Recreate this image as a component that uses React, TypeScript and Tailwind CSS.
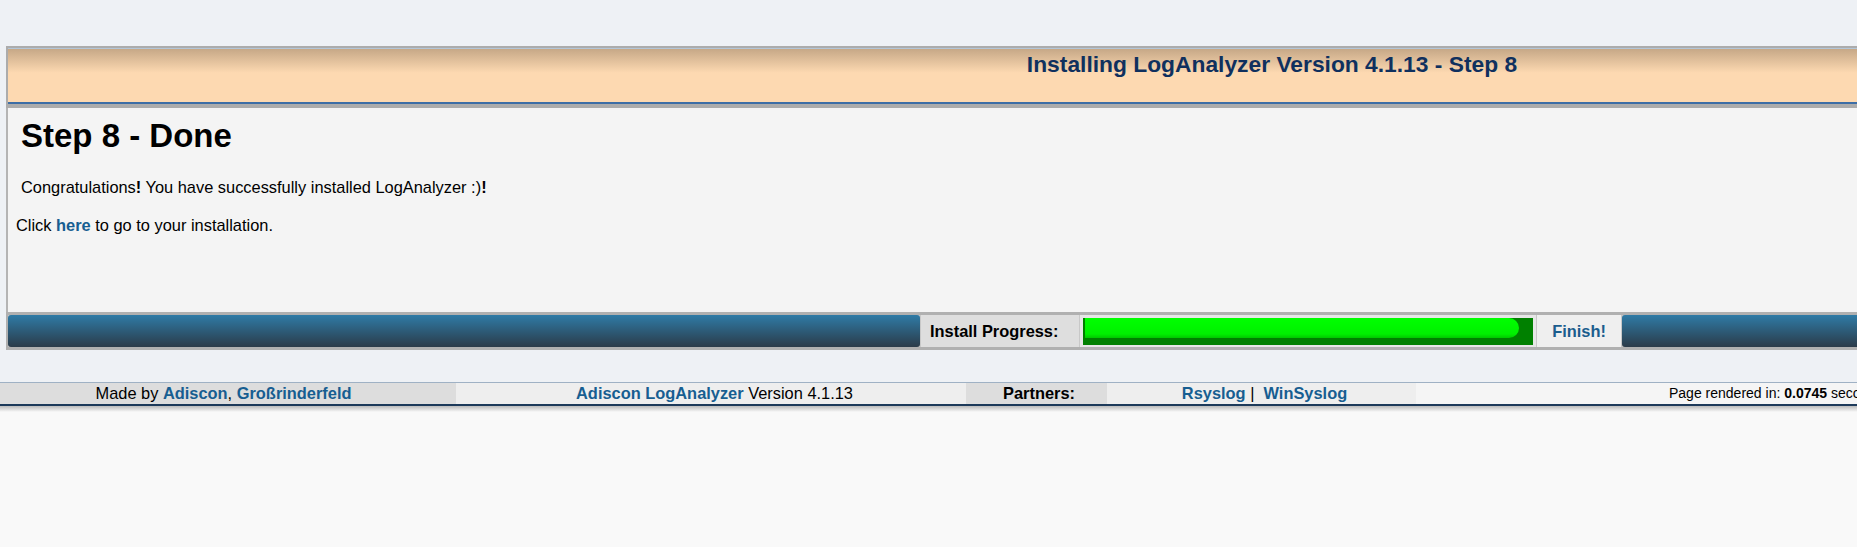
import React from "react";

const font = { fontFamily: '"Liberation Sans", Arial, sans-serif' };

const ProgressRow = () => (
  <div className="flex h-[38px] border-y-[3px] border-x-2 border-[#b0b0b0] bg-[#c8c8c8] gap-[1px]">
    <div className="w-[912px] shrink-0 rounded-[3px] bg-[linear-gradient(to_bottom,#2f7ba6,#2b3b49)]" />
    <div className="w-[158px] shrink-0 bg-[#dedede] flex items-center pl-[9px] text-[16.4px] font-bold text-black">
      Install Progress:
    </div>
    <div className="w-[456px] shrink-0 bg-[#e6e6e6] flex items-center px-[3px]">
      <div className="h-[27px] w-full bg-[#008000] flex items-start pl-[2px] pr-[14px]">
        <div className="h-[20px] w-full rounded-r-full rounded-l-[6px] bg-[linear-gradient(to_bottom,#00ff00,#00f000_80%,#00c800)]" />
      </div>
    </div>
    <div className="w-[84px] shrink-0 bg-[#efefef] flex items-center justify-center text-[16.4px] font-bold text-[#1b5d8d]">
      Finish!
    </div>
    <div className="flex-1 rounded-[3px] bg-[linear-gradient(to_bottom,#2f7ba6,#2b3b49)]" />
  </div>
);

const Footer = () => (
  <div className="w-[2544px]">
    <div className="flex h-[22px] border-t border-[#9fb1c4] text-[16.4px] leading-[21px] text-black">
      <div className="w-[456px] shrink-0 bg-[#dddddd] text-center pr-[9px]">
        Made by <a className="font-bold text-[#175e91]">Adiscon</a>,{" "}
        <a className="font-bold text-[#175e91]">Großrinderfeld</a>
      </div>
      <div className="w-[510px] shrink-0 bg-[#eeeeee] text-center pl-[7px]">
        <a className="font-bold text-[#175e91]">Adiscon LogAnalyzer</a> Version 4.1.13
      </div>
      <div className="w-[141px] shrink-0 bg-[#dddddd] text-center font-bold pl-[5px]">Partners:</div>
      <div className="w-[309px] shrink-0 bg-[#eeeeee] text-center pl-[6px]">
        <a className="font-bold text-[#175e91]">Rsyslog</a> |&nbsp;{" "}
        <a className="font-bold text-[#175e91]">WinSyslog</a>
      </div>
      <div className="flex-1 bg-[#f5f5f5] pl-[253px] text-[14px] whitespace-nowrap">
        Page rendered in: <b>0.0745</b> seconds | DB queries: <b>0</b> | GZIP enabled: <b>yes</b> | Script Timeout: <b>30</b> seconds
      </div>
    </div>
    <div className="h-[2px] bg-[#1d3a5a]" />
    <div className="h-[6px] bg-[linear-gradient(to_bottom,#bcbcbc,#f9f9f9)]" />
  </div>
);

export default function App() {
  return (
    <div className="w-full h-[547px] overflow-hidden bg-[#f9f9f9]" style={font}>
      <div className="w-[2544px] bg-[#eef1f5] pt-[46px] pb-[32px] px-[6px]">
        {/* header */}
        <div className="border-t-2 border-x-2 border-b-[4px] border-[#acacac]">
          <div className="h-[56px] border-t border-[#b3c6d8] border-b-2 border-b-[#3d6ea6] bg-[linear-gradient(to_bottom,#c6a887,#fdd9b1_45%,#fdd9b1)] text-center">
            <span className="text-[22.8px] leading-[30px] font-bold text-[#0f305e]">
              Installing LogAnalyzer Version 4.1.13 - Step 8
            </span>
          </div>
        </div>

        {/* main content */}
        <div className="h-[204px] border-l-2 border-[#b4b4b4] bg-[#f4f4f4] pt-[9px] text-black">
          <h1 className="pl-[13px] text-[33px] font-bold leading-[37px]">Step 8 - Done</h1>
          <p className="pl-[13px] mt-[24px] text-[16.4px] leading-[18px]">
            Congratulations<b>!</b> You have successfully installed LogAnalyzer :)<b>!</b>
          </p>
          <p className="pl-[8px] mt-[20px] text-[16.4px] leading-[18px]">
            Click <a className="font-bold text-[#175e91]">here</a> to go to your installation.
          </p>
        </div>

        <ProgressRow />
      </div>
      <Footer />
    </div>
  );
}
